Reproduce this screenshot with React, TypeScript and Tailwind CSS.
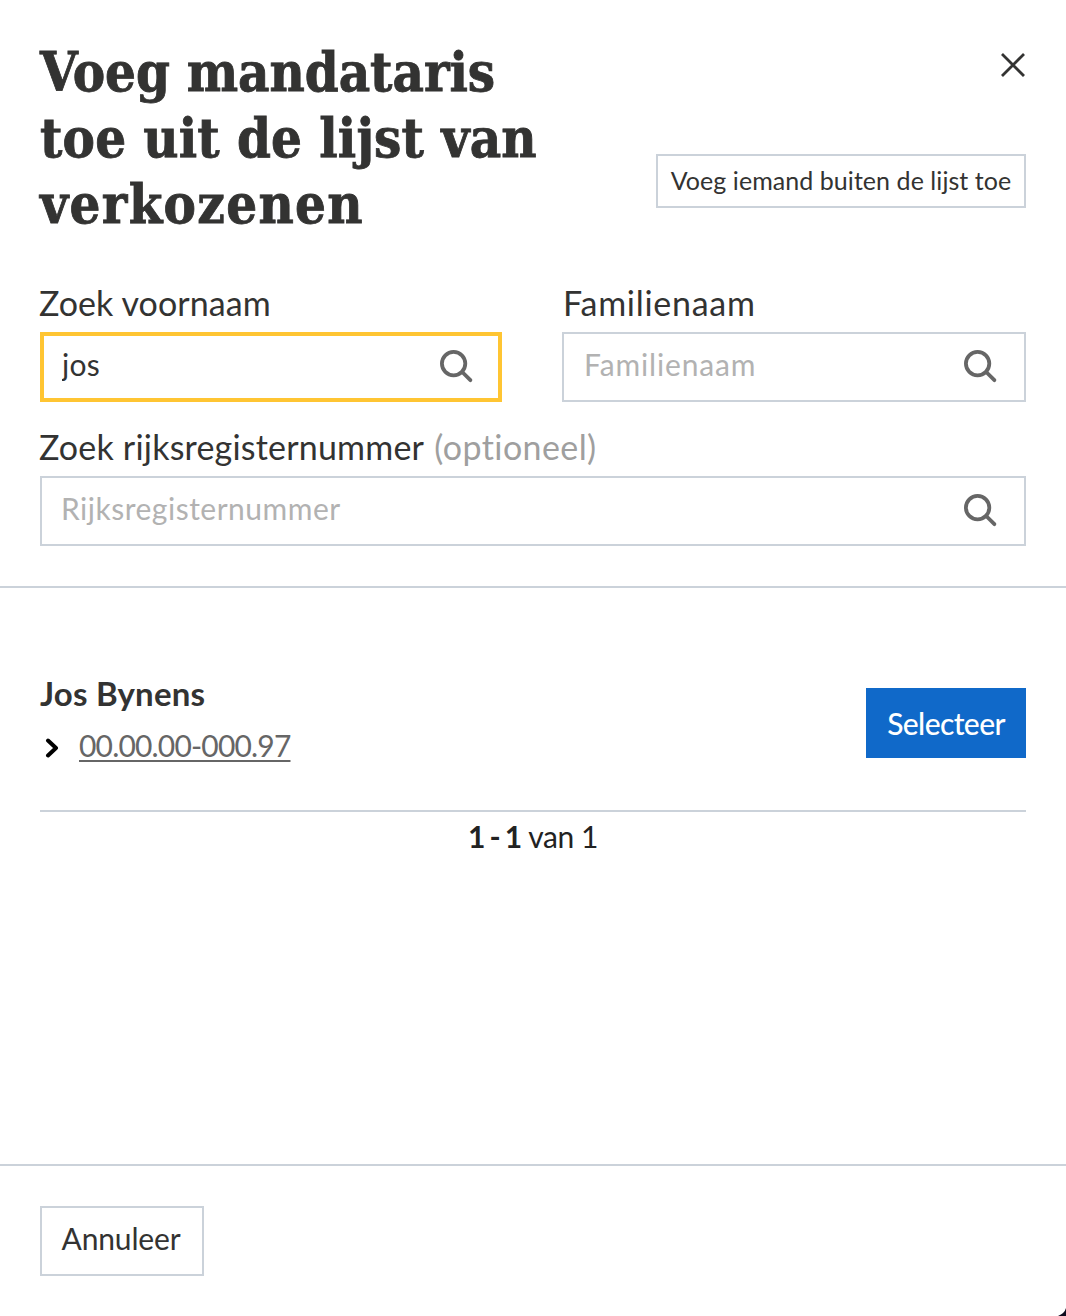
function SearchIcon() {
  return (
    <svg className="pointer-events-none absolute top-[16px] right-[26px] size-9" viewBox="0 0 36 36" fill="none" stroke="#666666" strokeLinecap="round">
      <circle cx="13.6" cy="15.6" r="11.7" strokeWidth="3.8" />
      <path d="M22.2 24 L30.4 32.2" strokeWidth="3.8" />
    </svg>
  );
}

type FieldProps = {
  id: string;
  inputClass: string;
  placeholder?: string;
  value?: string;
};

function SearchField({ id, inputClass, placeholder, value }: FieldProps) {
  return (
    <div className="relative mt-[9px] h-[70px]">
      <input
        id={id}
        type="text"
        className={
          "block h-[70px] w-full bg-white pb-[7px] text-[30px] text-[#333332] outline-none placeholder:text-[#b2b2b2] " +
          inputClass
        }
        placeholder={placeholder}
        defaultValue={value}
      />
      <SearchIcon />
    </div>
  );
}

export default function App() {
  return (
    <div className="relative flex h-[1316px] w-[1066px] flex-col overflow-hidden bg-white font-['Lato',sans-serif] text-[#333332]">
      <header className="h-[588px] border-b-2 border-[#cbd2da] px-10 pt-[39px]">
        <div className="flex h-[244px] justify-between">
          <h1 className="font-['DejaVu_Serif_Condensed','DejaVu_Serif',serif] text-[54px] leading-[66px] font-bold whitespace-nowrap [-webkit-text-stroke:0.8px_#333332]">
            <span className="block tracking-[-0.05px]">Voeg mandataris</span>
            <span className="block tracking-[0.15px]">toe uit de lijst van</span>
            <span className="block tracking-[1.3px]">verkozenen</span>
          </h1>
          <div className="flex flex-col items-end">
            <button type="button" aria-label="Sluit" className="mt-[13px] size-[26px]">
              <svg className="size-[26px]" viewBox="0 0 26 26" fill="none" stroke="#333332" strokeWidth="2.8">
                <path d="M2 2 L24 24 M24 2 L2 24" />
              </svg>
            </button>
            <button
              type="button"
              className="mt-[76px] flex h-[54px] w-[370px] items-center justify-center border-2 border-[#cbd2da] pb-[2px] text-[25px] leading-[30px] tracking-[0.06px] whitespace-nowrap"
            >
              Voeg iemand buiten de lijst toe
            </button>
          </div>
        </div>

        <div className="flex justify-between">
          <div className="w-[462px]">
            <label htmlFor="voornaam" className="-ml-px block text-[34px] leading-[40px] tracking-[0.08px]">
              Zoek voornaam
            </label>
            <SearchField
              id="voornaam"
              inputClass="border-4 border-[#ffc532] pl-[18px] tracking-[0.3px]"
              value="jos"
            />
          </div>
          <div className="w-[464px]">
            <label htmlFor="familienaam" className="ml-px block text-[34px] leading-[40px] tracking-[0.72px]">
              Familienaam
            </label>
            <SearchField
              id="familienaam"
              inputClass="border-2 border-[#cbd2da] pl-[20px] tracking-[0.85px]"
              placeholder="Familienaam"
            />
          </div>
        </div>

        <div className="mt-[25px]">
          <label htmlFor="rijksregister" className="-ml-px block text-[34px] leading-[40px] tracking-[0.2px]">
            Zoek rijksregisternummer <span className="ml-[2px] tracking-[0.4px] text-[#9f9f9f]">(optioneel)</span>
          </label>
          <SearchField
            id="rijksregister"
            inputClass="border-2 border-[#cbd2da] pl-[19px] tracking-[0.5px]"
            placeholder="Rijksregisternummer"
          />
        </div>
      </header>

      <main className="flex-1 px-10">
        <div className="flex h-[224px] justify-between border-b-2 border-[#cbd2da]">
          <div className="pt-[85px]">
            <h2 className="text-[33px] leading-[40px] font-bold tracking-[0.2px]">Jos Bynens</h2>
            <div className="mt-[14px] flex items-center">
              <svg className="mt-[5px] ml-[5px] h-[20px] w-[14px]" viewBox="0 0 14 20" fill="none" stroke="#000000" strokeWidth="4" strokeLinecap="round" strokeLinejoin="round">
                <path d="M3 2.5 L11 10 L3 17.5" />
              </svg>
              <a
                href="#"
                className="ml-[20px] text-[30px] leading-[36px] tracking-[-0.82px] text-[#666666] underline decoration-2 underline-offset-[3px] [text-decoration-skip-ink:none]"
              >
                00.00.00-000.97
              </a>
            </div>
          </div>
          <button
            type="button"
            className="mt-[100px] flex h-[70px] w-[160px] items-center justify-center bg-[#1069c9] text-[30px] font-medium tracking-[-0.6px] text-white"
          >
            Selecteer
          </button>
        </div>
        <p className="mt-[6px] text-center text-[30px] leading-[36px] text-[#222222]">
          <strong className="tracking-[-1.6px]">1 - 1</strong> <span className="tracking-[-0.4px]">van 1</span>
        </p>
      </main>

      <footer className="h-[152px] border-t-2 border-[#cbd2da] px-10 pt-10">
        <button
          type="button"
          className="flex h-[70px] w-[164px] items-center justify-center border-2 border-[#cbd2da] pr-[2px] pb-[5px] text-[30px] tracking-[-0.15px]"
        >
          Annuleer
        </button>
      </footer>

      <svg className="absolute right-0 bottom-0 size-2" viewBox="0 0 8 8" fill="#0d0b1e">
        <path d="M8 0 Q6.5 5.5 0 8 H8 Z" />
      </svg>
    </div>
  );
}
